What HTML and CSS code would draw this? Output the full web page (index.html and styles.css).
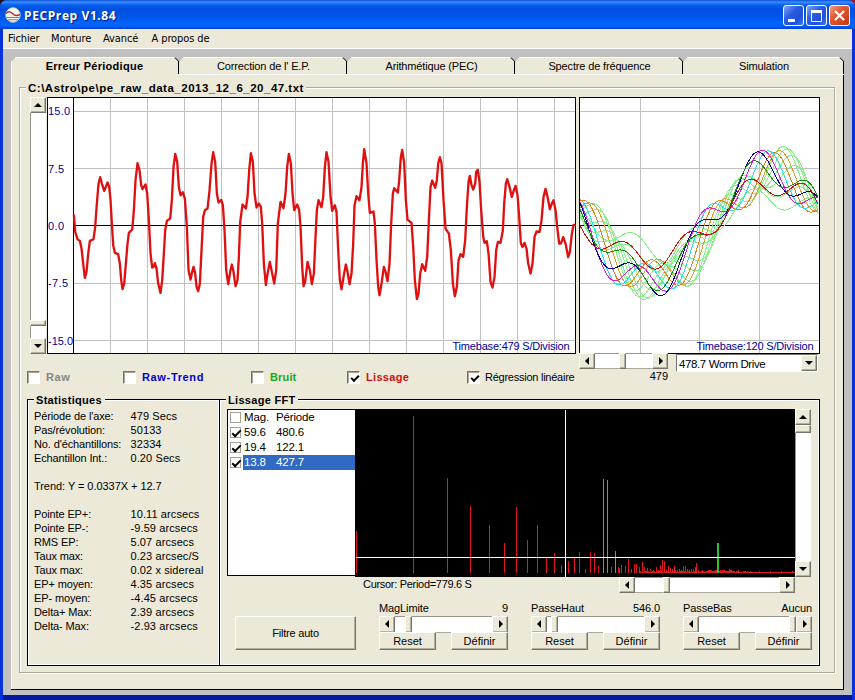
FILE: index.html
```html
<!DOCTYPE html>
<html lang="fr">
<head>
<meta charset="utf-8">
<title>PECPrep V1.84</title>
<link rel="stylesheet" href="styles.css">
</head>
<body>
<div class="window">
  <header class="titlebar">
    <svg class="appicon" width="16" height="16" viewBox="0 0 16 16"><circle cx="8" cy="8" r="7.2" fill="#f4f8f0" stroke="#c8d8c8"/><path d="M1 6.5C4 3.500 6 5 8 7s4 2 7 .5" fill="none" stroke="#b02828" stroke-width="1.4"/><path d="M1.5 10.5h13M3 12.8h10" stroke="#c86060" stroke-width="1"/></svg>
    <h1>PECPrep V1.84</h1>
    <div class="winbtns">
      <span class="wb"><svg width="20" height="20"><rect x="4" y="13" width="7" height="3" fill="#fff"/></svg></span>
      <span class="wb"><svg width="20" height="20"><path d="M4.500 5v10.500h10V5" fill="none" stroke="#fff"/><path d="M4 5.500h11" stroke="#fff" stroke-width="3"/></svg></span>
      <span class="wb close"><svg width="20" height="20"><path d="M5 5l9 9M14 5l-9 9" stroke="#fff" stroke-width="2.200"/></svg></span>
    </div>
  </header>
  <nav class="menu"><span class="m1">Fichier</span><span class="m2">Monture</span><span class="m3">Avancé</span><span class="m4">A propos de</span></nav>
  <main class="client">
    <div class="tabs">
      <div class="tab active"><span>Erreur Périodique</span></div>
      <div class="tab"><span>Correction de l' E.P.</span></div>
      <div class="tab"><span>Arithmétique (PEC)</span></div>
      <div class="tab"><span>Spectre de fréquence</span></div>
      <div class="tab last"><span>Simulation</span></div>
    </div>
    <section class="page">
      <div class="group">
        <h2 class="legend file">C:\Astro\pe\pe_raw_data_2013_12_6_20_47.txt</h2>
        <div class="charts">
          <div class="sb v"><i class="btn up"></i><i class="track t207"></i><i class="thumb h6"></i><i class="track"></i><i class="btn down"></i></div>
          <svg class="chart" width="529" height="257" viewBox="47 97 529 257">
            <rect x="47.500" y="97.500" width="528" height="256" fill="#fff" stroke="#000"/>
            <g id="grid1" stroke="#c0c0c0"></g>
            <path d="M73.500 97v257M73 225.500h503" stroke="#000"/>
            <g class="axis"><text x="48" y="115" textLength="22">15.0</text><text x="48" y="173" textLength="16">7.5</text><text x="48" y="230" textLength="16">0.0</text><text x="48" y="287" textLength="20">-7.5</text><text x="48" y="345" textLength="25">-15.0</text><text x="452.500" y="350" textLength="117">Timebase:479 S/Division</text></g>
            <polyline id="trace" transform="translate(20.200 90.200) scale(.33333)" fill="none" stroke="#e01010" stroke-width="7" stroke-linejoin="round"/>
          </svg>
          <svg class="chart second" width="241" height="257" viewBox="579 97 241 257">
            <rect x="579.500" y="97.500" width="240" height="256" fill="#fff" stroke="#000"/>
            <path d="M640.500 98v255M699.500 98v255M759.500 98v255M580 111.500h239M580 168.500h239M580 283.500h239M580 340.500h239" stroke="#c0c0c0"/>
            <path d="M580 225.500h239" stroke="#000"/>
            <g id="cycles" fill="none" shape-rendering="crispEdges"></g>
            <g class="axis"><text x="696.500" y="350" textLength="117">Timebase:120 S/Division</text></g>
          </svg>
        </div>
        <div class="controls">
          <div class="checks">
            <label><i class="cb"></i><b class="gray">Raw</b></label>
            <label><i class="cb"></i><b class="blue">Raw-Trend</b></label>
            <label><i class="cb"></i><b class="green">Bruit</b></label>
            <label><i class="cb on"></i><b class="red">Lissage</b></label>
            <label><i class="cb on"></i><span class="regr">Régression linéaire</span></label>
          </div>
          <div class="period">
            <div class="sb h"><i class="btn left"></i><i class="track t24"></i><i class="thumb w6"></i><i class="track"></i><i class="btn right"></i></div>
            <span>479</span>
          </div>
          <div class="combo"><span>478.7 Worm Drive</span><i class="btn down"></i></div>
        </div>
        <div class="frames">
          <section class="frame stats">
            <h2 class="legend">Statistiques</h2>
            <dl>
              <dt>Période de l'axe:</dt><dd>479 Secs</dd>
              <dt>Pas/révolution:</dt><dd>50133</dd>
              <dt>No. d'échantillons:</dt><dd>32334</dd>
              <dt>Echantillon Int.:</dt><dd>0.20 Secs</dd>
              <dt class="wide">Trend: Y = 0.0337X + 12.7</dt>
              <dt>Pointe EP+:</dt><dd>10.11 arcsecs</dd>
              <dt>Pointe EP-:</dt><dd>-9.59 arcsecs</dd>
              <dt>RMS EP:</dt><dd>5.07 arcsecs</dd>
              <dt>Taux max:</dt><dd>0.23 arcsec/S</dd>
              <dt>Taux max:</dt><dd>0.02 x sidereal</dd>
              <dt>EP+ moyen:</dt><dd>4.35 arcsecs</dd>
              <dt>EP- moyen:</dt><dd>-4.45 arcsecs</dd>
              <dt>Delta+ Max:</dt><dd>2.39 arcsecs</dd>
              <dt>Delta- Max:</dt><dd>-2.93 arcsecs</dd>
            </dl>
          </section>
          <section class="frame fft">
            <h2 class="legend">Lissage FFT</h2>
            <div class="fftrow">
              <ul class="list">
                <li><i class="lb"></i><p><span>Mag.</span><span>Période</span></p></li>
                <li><i class="lb on"></i><p><span>59.6</span><span>480.6</span></p></li>
                <li><i class="lb on"></i><p><span>19.4</span><span>122.1</span></p></li>
                <li><i class="lb on"></i><p class="sel"><span>13.8</span><span>427.7</span></p></li>
              </ul>
              <svg class="spectrum" width="440" height="168" viewBox="355 409 440 168" shape-rendering="crispEdges">
                <rect x="355" y="409" width="440" height="168"/>
                <path id="bars" stroke="#e01820"/>
                <path d="M603.500 573v-94M607.500 573v-93M615.500 573v-22" stroke="#30c830"/>
                <path d="M718 573v-30" stroke="#30c030" stroke-width="2"/>
                <path d="M565.500 410v167M356 557.500h439" stroke="#fff"/>
              </svg>
              <div class="sb v"><i class="btn up"></i><i class="thumb h8"></i><i class="track"></i><i class="btn down"></i></div>
            </div>
            <div class="cursorrow">
              <span>Cursor: Period=779.6 S</span>
              <div class="sb h"><i class="btn left"></i><i class="track t28"></i><i class="thumb w6"></i><i class="track"></i><i class="btn right"></i></div>
            </div>
            <div class="filters">
              <button class="auto">Filtre auto</button>
              <div class="filter">
                <p><span>MagLimite</span><span>9</span></p>
                <div class="sb h"><i class="btn left"></i><i class="track t10"></i><i class="thumb w6"></i><i class="track"></i><i class="btn right"></i></div>
                <div class="pair"><button>Reset</button><button>Définir</button></div>
              </div>
              <div class="filter">
                <p><span>PasseHaut</span><span>546.0</span></p>
                <div class="sb h"><i class="btn left"></i><i class="track t4"></i><i class="thumb w6"></i><i class="track"></i><i class="btn right"></i></div>
                <div class="pair"><button>Reset</button><button>Définir</button></div>
              </div>
              <div class="filter">
                <p><span>PasseBas</span><span>Aucun</span></p>
                <div class="sb h"><i class="btn left"></i><i class="track"></i><i class="thumb w6"></i><i class="btn right"></i></div>
                <div class="pair"><button>Reset</button><button>Définir</button></div>
              </div>
            </div>
          </section>
        </div>
      </div>
    </section>
  </main>
</div>
<script src="charts.js"></script>
</body>
</html>
```
FILE: styles.css
```css
* { box-sizing: border-box; margin: 0; padding: 0; }
body { width: 855px; height: 700px; overflow: hidden; background: linear-gradient(90deg, #201010, #201010 50%, #a01818 50%); font: 11px/14px "Liberation Sans", sans-serif; color: #000; }
i { font-style: normal; display: block; flex: none; }
.window { width: 855px; height: 700px; display: grid; grid-template-rows: 29px 20px 1fr; border-radius: 7px 7px 0 0; overflow: hidden; background: #0831d9; }

.titlebar { display: flex; align-items: center; padding: 1px 5px 0 5px; background: linear-gradient(#0a50d8 0, #3c8cf8 2px, #0860f0 5px, #0050e0 9px, #0054e6 16px, #0064fc 23px, #0062fa 26px, #003dcc 29px); }
.appicon { flex: none; }
.titlebar h1 { flex: 1; margin-left: 3px; padding-top: 2px; font: bold 12px/16px "Open Sans", sans-serif; letter-spacing: .6px; color: #fff; text-shadow: 1px 1px 1px #0a1883; }
.winbtns { display: flex; gap: 2px; margin-top: 1px; }
.wb { width: 21px; height: 21px; border: 1px solid #fff; border-radius: 3px; background: linear-gradient(135deg, #7fa6f8, #2a5ce4 40%, #1e50dc 70%, #3c78f0); }
.wb svg { display: block; }
.wb.close { background: linear-gradient(135deg, #f0a088, #e05830 40%, #d04420 75%, #c03810); }

.menu { display: flex; margin: 0 3px; padding: 2px 5px 0; background: #ece9d8; border-bottom: 1px solid #fff; font: 11px/15px "DejaVu Sans Condensed", "DejaVu Sans", sans-serif; letter-spacing: -.1px; white-space: nowrap; }
.m1 { width: 43px; }
.m2 { width: 52px; }
.m3 { width: 48.5px; }

.client { margin: 0 3px; padding: 8px 8px 5px; background: #c0c0c0; display: grid; grid-template-rows: 17px 616px 1fr; border-bottom: 5px solid #0019a0; }
.tabs { display: grid; grid-template-columns: repeat(4, 168px) 161px; letter-spacing: -.15px; }
.tab { position: relative; background: #ece9d8; border-top: 1px solid #fff; border-bottom: 1px solid #fff; text-align: center; line-height: 16px; padding-left: 1px; clip-path: polygon(0 5px, 5px 0, calc(100% - 4px) 0, 100% 4px, 100% 100%, 0 100%); }
.tab::after { content: ""; position: absolute; right: 0; top: 3px; width: 1px; height: 13px; background: #000; }
.tab::before { content: ""; position: absolute; right: -1px; top: 1px; width: 6px; height: 1px; background: #000; transform: rotate(45deg); }
.tab.active { font-weight: bold; border-bottom-color: #ece9d8; border-left: 1px solid #fff; letter-spacing: .28px; padding: 0 2px 0 0; }
.page { width: 833px; background: #ece9d8; border: solid #000; border-width: 0 1px 1px 0; box-shadow: inset 1px 0 #fff; padding: 13px 8px 16px; }

.group { position: relative; width: 816px; height: 586px; border: 1px solid #aca899; box-shadow: inset 1px 1px #fff, 1px 1px #fff; }
.legend { width: max-content; height: 14px; font: bold 11px/14px "Liberation Sans", sans-serif; letter-spacing: .3px; background: #ece9d8; white-space: nowrap; }
.legend.file { margin: -7px 0 2px 6px; padding: 0 2px; font-size: 11.5px; letter-spacing: .5px; }
.charts { display: flex; padding-left: 10px; height: 257px; }
.chart { display: block; margin-left: 1px; }
.chart.second { margin-left: 3px; }
.axis { font: 11px "Liberation Sans", sans-serif; fill: #000098; }

.sb { display: flex; background: #fff; }
.sb .track { flex: 1; background: #fff; }
.sb.v { width: 16px; flex-direction: column; }
.sb.h { height: 16px; }
.sb.v .track { box-shadow: inset 1px 0 #9a978a; }
.sb.h .track { box-shadow: inset 0 1px #9a978a, inset 0 -1px #aca899; }
.sb .t207 { flex: 0 0 207px; }
.sb .t24 { flex: 0 0 24px; }
.sb .t28 { flex: 0 0 28px; }
.sb .t10 { flex: 0 0 10px; }
.sb .t4 { flex: 0 0 4px; }
.btn, .thumb, button { background: #ece9d8; border: 1px solid; border-color: #fff #76746a #76746a #fff; box-shadow: inset -1px -1px #b4b1a2; }
.btn { width: 16px; height: 16px; position: relative; }
.h6 { height: 6px; }
.h8 { height: 8px; }
.w6 { width: 7px; }
.btn::after { content: ""; position: absolute; left: 3px; top: 5px; border: 4px solid transparent; }
.up::after { border-width: 0 4px 4px; border-bottom-color: #000; }
.down::after { border-width: 4px 4px 0; border-top-color: #000; }
.left::after { left: 5px; top: 3px; border-width: 4px 4px 4px 0; border-right-color: #000; }
.right::after { left: 6px; top: 3px; border-width: 4px 0 4px 4px; border-left-color: #000; }

.controls { position: relative; display: grid; grid-template-columns: 552px 89px 150px; margin: -1px 0 0 7px; height: 46px; }
.checks { display: grid; grid-template-columns: 96px 128px 96px 120px 1fr; padding-top: 18px; height: 31px; }
.checks label { display: flex; align-items: center; height: 13px; line-height: 13px; white-space: nowrap; }
.checks label > :last-child { margin-top: -1px; }
.cb { width: 13px; height: 13px; margin-right: 6px; background: #fff; border: 1px solid; border-color: #76746a #fff #fff #76746a; box-shadow: inset 1px 1px #a5a294; position: relative; }
.cb.on::after, .lb.on::after { content: ""; position: absolute; left: 3px; top: 3px; width: 6px; height: 3px; border: solid #000; border-width: 0 0 2px 2px; transform: rotate(-45deg); }
.gray { color: #858585; letter-spacing: .6px; }
.blue { color: #0000d0; letter-spacing: .65px; }
.green { color: #18a818; letter-spacing: .15px; }
.red { color: #d01010; letter-spacing: .3px; }
.regr { letter-spacing: -.25px; margin-left: -1px; }
.period span { display: block; text-align: right; line-height: 14px; }
.combo { margin: 1px 0 0 8px; width: 142px; height: 18px; display: flex; justify-content: space-between; background: #fff; border: 1px solid; border-color: #76746a #fff #fff #76746a; padding-left: 2px; line-height: 18px; font-size: 11.5px; letter-spacing: -.38px; white-space: nowrap; }

.frames { display: flex; margin-left: 7px; }
.frame { height: 267px; border: 1px solid #000; box-shadow: inset 1px 1px #fff, inset -1px -1px #fff; }
.frame .legend { margin: -7px 0 1px 6px; padding: 0 3px 0 2px; }
.stats { width: 193px; }
.fft { width: 601px; margin-left: -1px; }
dl { display: grid; grid-template-columns: 96.5px 90px; grid-auto-rows: 14px; padding: 1px 0 0 6px; white-space: nowrap; }
dt { letter-spacing: -.12px; }
dd { letter-spacing: .1px; }
.wide { grid-column: 1 / 3; padding: 14px 0; height: 42px; grid-row: span 3; letter-spacing: -.05px; }

.fftrow { display: flex; padding: 1px 0 0 7px; height: 169px; }
.list { width: 128px; height: 167px; list-style: none; background: #fff; border: 1px solid #000; border-right: 0; }
.list li { display: flex; height: 15px; align-items: center; padding-left: 2px; font-size: 11.5px; letter-spacing: -.15px; }
.lb { width: 11px; height: 11px; border: 1px solid #a5a294; background: #fff; margin-right: 2px; position: relative; }
.lb.on::after { left: 1px; top: 2px; width: 7px; height: 3px; }
.list p { flex: 1; display: flex; height: 15px; line-height: 15px; padding-left: 1px; }
.list p span:first-child { width: 32px; }
.list p.sel { background: #316ac5; color: #fff; }
.spectrum { display: block; flex: none; }

.cursorrow { display: flex; justify-content: space-between; height: 16px; padding: 0 24px 0 143px; letter-spacing: -.3px; }
.cursorrow .sb { width: 176px; }
.filters { display: grid; grid-template-columns: 121px 129px 129px 129px; column-gap: 23px; padding: 8px 0 0 15px; }
.auto { height: 34px; margin-top: 15px; letter-spacing: -.2px; }
button { font: 11px/14px "Liberation Sans", sans-serif; color: #000; }
.filter p { display: flex; justify-content: space-between; height: 15px; line-height: 14px; letter-spacing: -.1px; }
.filter .sb { height: 17px; }
.filter .btn, .filter .thumb { height: 17px; }
.pair { display: flex; justify-content: space-between; margin-top: -1px; position: relative; }
.pair button { width: 57px; height: 18px; line-height: 15px; }
```
FILE: charts.js
```js
// Smoothed error samples, in thirds of a pixel.
const data = `161,373 165,425 172,447 179,452 184,475 190,530 194,563 199,545 204,490 209,452 220,447 225,410 230,340 235,280 240,261 245,280 252,302 257,290 262,277 267,290 271,330 275,400 279,465 284,488 294,492 299,520 303,570 307,597 312,580 317,520 322,460 326,428 336,418 341,360 346,270 352,219 358,240 363,285 367,297 371,290 376,283 381,310 386,390 391,490 396,532 400,530 404,519 409,535 414,580 421,608 426,570 431,490 435,420 440,392 450,385 455,330 460,230 465,191 471,215 476,290 481,315 485,310 488,306 494,325 500,410 505,540 511,568 516,545 520,530 525,550 529,590 534,603 539,580 543,500 549,380 554,360 562,355 568,300 574,220 579,186 585,215 590,310 595,337 603,329 608,345 613,420 618,540 624,582 630,545 635,523 640,545 646,588 652,570 656,500 660,395 667,343 677,355 682,320 687,240 692,189 698,215 703,310 709,352 716,340 722,350 726,400 731,520 737,585 743,545 749,515 755,545 762,580 768,540 773,400 781,335 790,354 796,310 801,230 806,191 812,220 817,310 822,360 831,343 837,360 841,410 846,530 850,588 855,575 862,515 869,540 875,582 881,550 886,440 890,360 895,330 904,351 909,320 914,230 919,186 925,215 931,320 936,362 944,345 949,365 954,480 959,570 964,597 970,560 977,523 982,545 988,582 994,550 999,460 1003,345 1009,318 1018,330 1024,290 1028,220 1032,177 1039,220 1044,310 1049,368 1060,364 1064,400 1069,510 1074,590 1078,615 1084,580 1091,530 1096,545 1102,573 1108,520 1113,400 1118,310 1122,294 1133,307 1137,270 1142,200 1146,179 1152,220 1157,330 1162,388 1174,398 1179,470 1184,570 1190,627 1195,610 1200,550 1206,522 1215,542 1221,500 1226,390 1231,290 1236,271 1245,293 1250,270 1254,220 1259,201 1264,220 1270,330 1276,415 1286,430 1292,480 1298,580 1304,618 1310,590 1315,510 1321,492 1329,500 1335,450 1340,350 1345,275 1349,257 1354,285 1359,298 1365,280 1368,245 1373,239 1378,275 1383,360 1389,440 1393,458 1400,453 1405,490 1411,575 1417,592 1423,560 1428,480 1433,455 1441,458 1448,420 1452,340 1457,280 1461,267 1468,290 1475,320 1481,300 1486,287 1492,315 1497,380 1502,460 1507,470 1513,458 1519,475 1524,520 1531,550 1537,520 1543,440 1549,424 1558,425 1564,390 1570,320 1576,296 1582,320 1589,357 1595,340 1600,330 1606,360 1611,410 1617,460 1622,460 1629,441 1636,460 1644,501 1649,485 1655,430 1660,405 1666,403`
  .split(/\s+/).map(p => p.split(",").map(Number));
document.getElementById("trace").setAttribute("points", data.map(p => p.join()).join(" "));

let grid = "";
for (let x = 110.5; x < 575; x += 37) grid += `M${x} 98v255`;
for (const y of [111.5, 168.5, 283.5, 340.5]) grid += `M74 ${y}h501`;
document.getElementById("grid1").innerHTML = `<path d="${grid}"/>`;

// Least-squares fit of the worm fundamental and its fourth harmonic.
const freqs = [];
for (let f = -4; f <= 4; f++) freqs.push(13.4 + f, 53 + f);
const basis = u => {
  const t = (u - 161) / 1505 * 2 * Math.PI;
  return [1].concat(...freqs.map(f => [Math.cos(f * t), Math.sin(f * t)]));
};
const n = freqs.length * 2 + 1;
const A = Array.from({ length: n }, (_, i) => Array.from({ length: n + 1 }, (_, j) => i === j ? 0.3 : 0));
for (const [u, v] of data) {
  const b = basis(u);
  for (let i = 0; i < n; i++) {
    for (let j = 0; j < n; j++) A[i][j] += b[i] * b[j];
    A[i][n] += b[i] * (v - 406);
  }
}
for (let i = 0; i < n; i++)
  for (let r = 0; r < n; r++) if (r !== i) {
    const k = A[r][i] / A[i][i];
    for (let c = i; c <= n; c++) A[r][c] -= k * A[i][c];
  }
const coef = A.map((row, i) => row[n] / row[i]);
const value = u => 406 + basis(u).reduce((s, b, i) => s + b * coef[i], 0);

const colors = ["#d01010", "#109010", "#000098", "#d820d8", "#20e0e8", "#e08020", "#d8a030"];
let cycles = "";
for (let k = 13; k >= 0; k--) {
  let pts = "";
  for (let x = 0; x <= 239; x += 2) {
    const u = 161 + (k + x / 240) * 111.15;
    if (u > 1664) break;
    pts += `${580 + x},${(90.2 + value(u) / 3).toFixed(1)} `;
  }
  cycles += `<polyline points="${pts}" stroke="${colors[k] || "#88f088"}"/>`;
}
document.getElementById("cycles").innerHTML = cycles;

// Spectrum peaks: x, height.
const peaks = [356,42,413,157,447,95,470,67,489,48,504,30,516,66,527,33,537,48,546,15,554,20,561,8,568,12,574,15,579,21,585,4,590,21,594,20,598,7,611,6,618,6,619,5,621,8,625,7,628,14,631,4,634,9,636,9,639,6,642,11,644,6,647,5,650,4,653,3,656,6,658,3,660,8,662,13,664,12,668,7,670,5,672,4,674,7,677,3,679,4,681,3,683,7,685,7,687,4,689,3,691,4,693,4,695,6,696,10,698,3];
let bars = "";
for (let i = 0; i < peaks.length; i += 2) bars += `M${peaks[i] + 0.5} 573v${-peaks[i + 1]}`;
for (let x = 640; x < 795; x++) {
  const h = x > 750 ? 1 + (x * 7 % 11 === 0) : 1 + (x * 13 % 7 > 3) + (x * 5 % 9 === 0) + (x > 705 && x < 735 ? 1 : 0);
  bars += `M${x + 0.5} 573v${-h}`;
}
document.getElementById("bars").setAttribute("d", bars);
```
